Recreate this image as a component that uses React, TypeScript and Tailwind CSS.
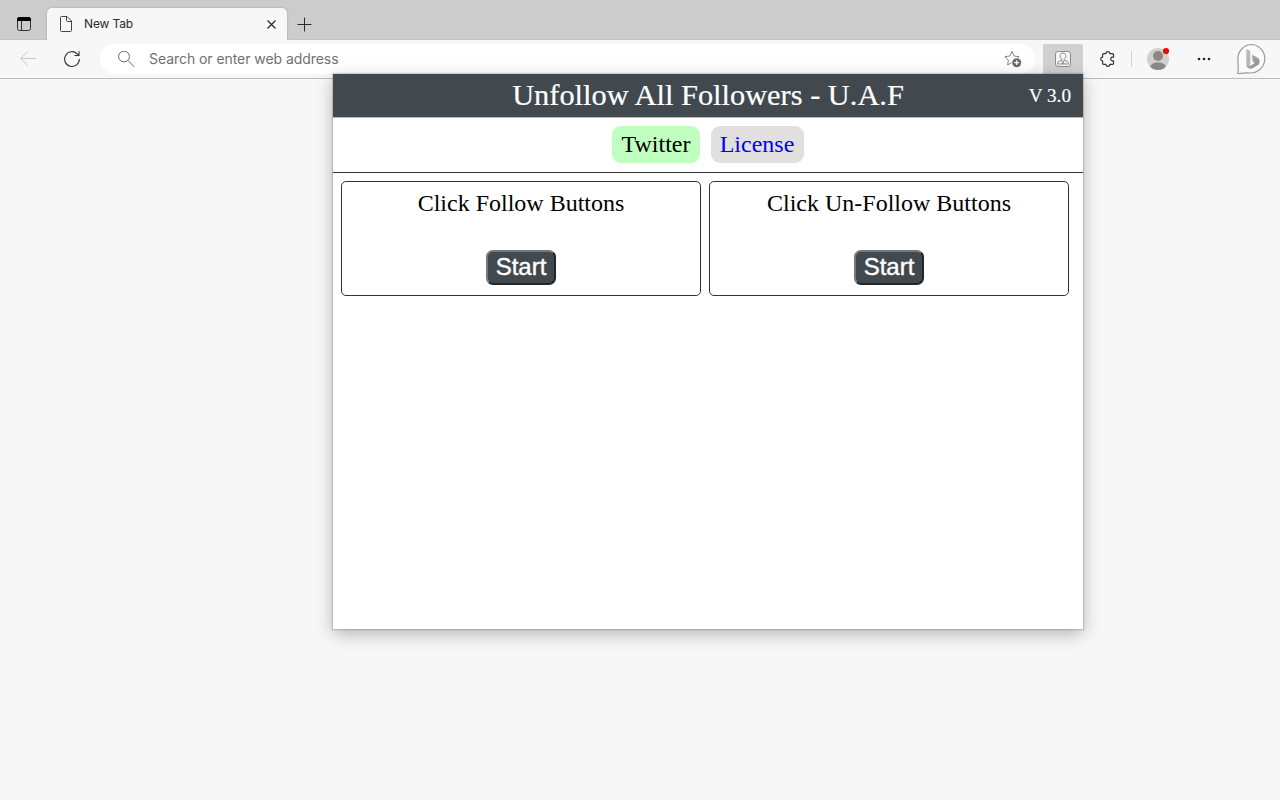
interface ClickerCardProps {
  title: string;
}

function ClickerCard({ title }: ClickerCardProps) {
  return (
    <div className="flex h-[115px] w-[360px] flex-col items-center rounded-[5px] border-[1.5px] border-[#2f3437] pt-[6px]">
      <h2 className="text-[24px] leading-[30px] text-black">{title}</h2>
      <button className="mt-8 h-[35px] w-[70px] rounded-[7px] border-2 border-t-[#75797b] border-l-[#75797b] border-r-[#232527] border-b-[#232527] bg-[#42494e] pb-px font-['Liberation_Sans',Arial,sans-serif] text-[24px] leading-[30px] text-white [-webkit-text-stroke:0.4px_#fff]">
        Start
      </button>
    </div>
  );
}

function TabStrip() {
  return (
    <div className="flex h-10 items-end bg-[#cccccc] shadow-[inset_0_-1px_0_#c3c3c3]">
      <div className="flex h-8 w-[47px] items-center pl-[17px]">
        <svg width="14" height="14" viewBox="0 0 14 14" fill="none" stroke="#333">
          <rect x="0.5" y="0.5" width="13" height="13" rx="2" />
          <path d="M0 4V2.500a2.500 2.500 0 0 1 2.500-2.500h9a2.500 2.500 0 0 1 2.500 2.500V4z" fill="#000" stroke="none" />
          <path d="M4.500 4v9.500" />
        </svg>
      </div>
      <div className="flex h-8 w-[240px] items-center rounded-t-[5px] bg-[#f7f7f7] pl-[13px] pr-[11px] shadow-[0_0_2px_rgba(0,0,0,0.25)] [clip-path:inset(-3px_-3px_0_-3px)]">
        <svg width="12" height="16" viewBox="0 0 12 16" fill="none" stroke="#444">
          <path d="M1.500.5H7L11.500 5v9.500a1 1 0 0 1-1 1h-9a1 1 0 0 1-1-1v-13a1 1 0 0 1 1-1z" />
          <path d="M6.500.5v4a1 1 0 0 0 1 1h4" />
        </svg>
        <span className="ml-3 text-[12px] tracking-[-0.15px] text-[#2b2b2b]">New Tab</span>
        <svg className="ml-auto" width="9" height="9" viewBox="0 0 9 9" stroke="#222" strokeWidth="1.100">
          <path d="M.5.5l8 8M8.500.5l-8 8" />
        </svg>
      </div>
      <div className="flex h-8 items-center pl-[10px]">
        <svg width="15" height="15" viewBox="0 0 15 15" stroke="#2b2b2b">
          <path d="M7.500.5v14M.5 7.500h14" />
        </svg>
      </div>
    </div>
  );
}

function Toolbar() {
  return (
    <div className="flex h-[39px] items-center border-b border-[#bcbcbc] bg-[#f7f7f7]">
      <svg className="ml-5" width="16" height="16" viewBox="0 0 16 16" fill="none" stroke="#c8c8c8">
        <path d="M7.500.7L.7 7.500l6.800 6.800M.7 7.500H16" />
      </svg>
      <svg className="ml-7" width="16" height="17" viewBox="0 0.5 16 17" fill="none" stroke="#333" strokeWidth="1.100">
        <path d="M15.400 8.500A7.400 7.400 0 1 1 13.200 3.300L14.900 5" />
        <path d="M15 .8V5h-4.500" />
      </svg>

      <div className="ml-5 flex h-[30px] w-[935px] items-center rounded-full bg-white pl-[18px] pr-[13px]">
        <svg width="17" height="17" viewBox="0 0.5 17 17" fill="none" stroke="#666">
          <circle cx="6" cy="6" r="5.400" />
          <path d="M10 10l6.300 6.300" />
        </svg>
        <span className="ml-[14px] pb-px text-[14px] tracking-[-0.06px] text-[#707070]">
          Search or enter web address
        </span>
        <svg className="ml-auto" width="18" height="18" viewBox="0 0 18 18" fill="none">
          <path
            d="M8 1.500l2.100 4.500 5 .7-3.600 3.500.8 4.700L8 12.500l-4.400 2.400.8-4.700L.8 6.700l5-.7z"
            stroke="#777"
            strokeWidth="0.900"
            strokeLinejoin="round"
          />
          <circle cx="12.700" cy="12.700" r="5.200" fill="#fff" />
          <circle cx="12.700" cy="12.700" r="4.500" fill="#6b6b6b" />
          <path d="M12.700 10.300v4.800M10.300 12.700h4.800" stroke="#fff" strokeWidth="1.200" />
        </svg>
      </div>

      <div className="ml-2 flex h-[30px] w-10 items-center justify-center rounded-t-[2px] bg-[#d1d1d1]">
        <svg width="16" height="16" viewBox="0 0 16 16" fill="none" stroke="#858585" strokeWidth="0.900">
          <rect x=".5" y=".5" width="15" height="15" rx="2.500" fill="#f5f5f5" />
          <path d="M5.200 4.600c0-3.400 5.600-3.400 5.600 0 0 1.800-.7 2.900-1.500 3.700v1l3.200 1.100c.8.400.8 1 .8 2.600H2.700c0-1.600 0-2.200.8-2.600l3.200-1.100v-1C5.900 7.500 5.200 6.400 5.200 4.600z" />
          <path d="M6.700 9.300L8 10.800l1.300-1.500M7.300 10.500v2.500M8.700 10.500v2.500" />
        </svg>
      </div>

      <svg className="ml-[17px]" width="15" height="16" viewBox="0.5 0 15 16" fill="none" stroke="#333" strokeWidth="1.200" strokeLinejoin="round">
        <path d="M4 2.600h2.400a1.900 1.900 0 0 1 3.800 0h2.900a.9.900 0 0 1 .9.900v2.700h-1a1.800 1.800 0 0 0 0 3.600h1v2.700a.9.900 0 0 1-.9.900h-2.900a1.900 1.900 0 0 1-3.800 0H4a.9.900 0 0 1-.9-.9V9.900a1.900 1.900 0 0 1 0-3.800V3.500a.9.900 0 0 1 .9-.9z" />
      </svg>
      <div className="ml-4 h-4 w-px bg-[#d3d3d3]" />

      <svg className="ml-[14px]" width="24" height="24" viewBox="0 1 24 24">
        <clipPath id="avatar">
          <circle cx="12" cy="13" r="11" />
        </clipPath>
        <circle cx="12" cy="13" r="11" fill="#d1d0cd" />
        <circle cx="12" cy="10" r="5" fill="#8b8784" />
        <ellipse cx="12" cy="21.500" rx="8" ry="5.300" fill="#8b8784" clipPath="url(#avatar)" />
        <circle cx="20" cy="5" r="3.100" fill="#e8090c" />
      </svg>

      <svg className="ml-[27px]" width="14" height="4" viewBox="0 0 14 4" fill="#222">
        <circle cx="2" cy="2" r="1.300" />
        <circle cx="7" cy="2" r="1.300" />
        <circle cx="12" cy="2" r="1.300" />
      </svg>

      <svg className="ml-[25px]" width="32" height="32" viewBox="0 0 32 32" fill="none">
        <defs>
          <linearGradient id="bing" x1="0" y1="0" x2="1" y2="1">
            <stop offset="0" stopColor="#b0b0b0" />
            <stop offset="1" stopColor="#8e8e8e" />
          </linearGradient>
        </defs>
        <path
          d="M16.200 1.500A14.300 14.300 0 1 1 12.700 29.900C9.300 29.300 5 31.200 1.700 30.300 2.900 27 1.900 22 1.900 16A14.300 14.300 0 0 1 16.200 1.500z"
          fill="#fbfbfb"
          stroke="#999"
          strokeWidth="1.200"
        />
        <path d="M10.300 6l4 2v12.200l-1 5c-1.900-.4-3-1.900-3-3.700z" fill="#b8b8b8" />
        <path
          d="M16 11.700l5 2.500c3 1.500 3.500 5.300 1.300 7.600l-5.300 3.200c-2.600 1.500-6 .4-6.600-2.700 1 1.200 2.600 1.300 3.900.5l4.300-2.600-2-2z"
          fill="url(#bing)"
        />
      </svg>
    </div>
  );
}

function ExtensionPopup() {
  return (
    <div className="absolute top-[74px] left-[333px] h-[555px] w-[750px] bg-white font-['Liberation_Serif','Times_New_Roman',serif] shadow-[0_0_1px_1px_rgba(0,0,0,0.14),0_5px_16px_rgba(0,0,0,0.27)]">
      <header className="grid h-[43px] grid-cols-[1fr_auto_1fr] items-center bg-[#42494e] px-3 text-white shadow-[0_1px_0_#b8bbbd]">
        <span />
        <h1 className="text-[30.400px] leading-[43px] [-webkit-text-stroke:0.2px_#fff]">Unfollow All Followers - U.A.F</h1>
        <span className="pt-px text-right text-[19.200px] [-webkit-text-stroke:0.2px_#fff]">V 3.0</span>
      </header>
      <nav className="flex h-[56px] items-start justify-center gap-[11px] border-b-[1.5px] border-[#2f3437] pt-[9px] text-[24px] leading-[37px]">
        <a className="h-[37px] w-[88px] rounded-[9px] bg-[#bfffbf] text-center text-black">Twitter</a>
        <a className="h-[37px] w-[93px] rounded-[9px] bg-[#e1e0df] pr-px text-center text-[#0000ff]">License</a>
      </nav>
      <main className="flex gap-2 px-2 pt-2">
        <ClickerCard title="Click Follow Buttons" />
        <ClickerCard title="Click Un-Follow Buttons" />
      </main>
    </div>
  );
}

export default function App() {
  return (
    <div className="relative h-[800px] w-[1280px] overflow-hidden bg-[#f7f7f7] font-['Inter',sans-serif]">
      <TabStrip />
      <Toolbar />
      <ExtensionPopup />
    </div>
  );
}
